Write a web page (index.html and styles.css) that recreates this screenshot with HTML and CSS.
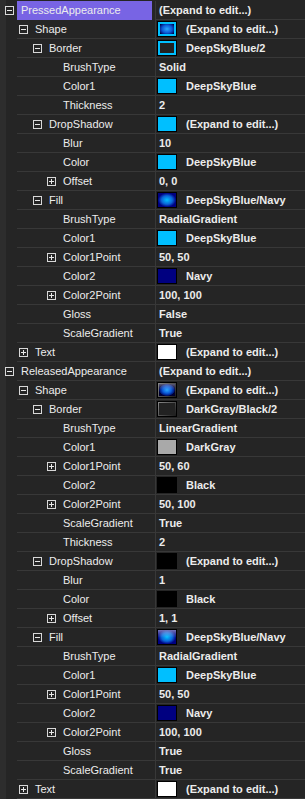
FILE: index.html
```html
<!DOCTYPE html>
<html>
<head>
    <meta charset="UTF-8">
    <title>Property Grid</title>
    <link rel="stylesheet" href="styles.css">
</head>
<body>
    <!-- property grid -->
    <div class="grid">
        <div class="row sel"><span class="gut"><i class="exp minus"></i></span><span class="name l0">PressedAppearance</span><span class="val">(Expand to edit...)</span></div>
        <div class="row"><span class="gut"></span><span class="name l1"><i class="exp minus"></i>Shape</span><span class="val"><b class="sw shape1"></b>(Expand to edit...)</span></div>
        <div class="row"><span class="gut"></span><span class="name l2"><i class="exp minus"></i>Border</span><span class="val"><b class="sw ring-blue"></b>DeepSkyBlue/2</span></div>
        <div class="row"><span class="gut"></span><span class="name leaf">BrushType</span><span class="val">Solid</span></div>
        <div class="row"><span class="gut"></span><span class="name leaf">Color1</span><span class="val"><b class="sw dsb"></b>DeepSkyBlue</span></div>
        <div class="row"><span class="gut"></span><span class="name leaf">Thickness</span><span class="val">2</span></div>
        <div class="row"><span class="gut"></span><span class="name l2"><i class="exp minus"></i>DropShadow</span><span class="val"><b class="sw dsb"></b>(Expand to edit...)</span></div>
        <div class="row"><span class="gut"></span><span class="name leaf">Blur</span><span class="val">10</span></div>
        <div class="row"><span class="gut"></span><span class="name leaf">Color</span><span class="val"><b class="sw dsb"></b>DeepSkyBlue</span></div>
        <div class="row"><span class="gut"></span><span class="name l3"><i class="exp"></i>Offset</span><span class="val">0, 0</span></div>
        <div class="row"><span class="gut"></span><span class="name l2"><i class="exp minus"></i>Fill</span><span class="val"><b class="sw fill1"></b>DeepSkyBlue/Navy</span></div>
        <div class="row"><span class="gut"></span><span class="name leaf">BrushType</span><span class="val">RadialGradient</span></div>
        <div class="row"><span class="gut"></span><span class="name leaf">Color1</span><span class="val"><b class="sw dsb"></b>DeepSkyBlue</span></div>
        <div class="row"><span class="gut"></span><span class="name l3"><i class="exp"></i>Color1Point</span><span class="val">50, 50</span></div>
        <div class="row"><span class="gut"></span><span class="name leaf">Color2</span><span class="val"><b class="sw navy"></b>Navy</span></div>
        <div class="row"><span class="gut"></span><span class="name l3"><i class="exp"></i>Color2Point</span><span class="val">100, 100</span></div>
        <div class="row"><span class="gut"></span><span class="name leaf">Gloss</span><span class="val">False</span></div>
        <div class="row"><span class="gut"></span><span class="name leaf">ScaleGradient</span><span class="val">True</span></div>
        <div class="row"><span class="gut"></span><span class="name l1"><i class="exp"></i>Text</span><span class="val"><b class="sw white"></b>(Expand to edit...)</span></div>

        <div class="row"><span class="gut"><i class="exp minus"></i></span><span class="name l0">ReleasedAppearance</span><span class="val">(Expand to edit...)</span></div>
        <div class="row"><span class="gut"></span><span class="name l1"><i class="exp minus"></i>Shape</span><span class="val"><b class="sw shape2"><b class="core"></b></b>(Expand to edit...)</span></div>
        <div class="row"><span class="gut"></span><span class="name l2"><i class="exp minus"></i>Border</span><span class="val"><b class="sw ring-gray"><b class="core"></b></b>DarkGray/Black/2</span></div>
        <div class="row"><span class="gut"></span><span class="name leaf">BrushType</span><span class="val">LinearGradient</span></div>
        <div class="row"><span class="gut"></span><span class="name leaf">Color1</span><span class="val"><b class="sw gray"></b>DarkGray</span></div>
        <div class="row"><span class="gut"></span><span class="name l3"><i class="exp"></i>Color1Point</span><span class="val">50, 60</span></div>
        <div class="row"><span class="gut"></span><span class="name leaf">Color2</span><span class="val"><b class="sw black"></b>Black</span></div>
        <div class="row"><span class="gut"></span><span class="name l3"><i class="exp"></i>Color2Point</span><span class="val">50, 100</span></div>
        <div class="row"><span class="gut"></span><span class="name leaf">ScaleGradient</span><span class="val">True</span></div>
        <div class="row"><span class="gut"></span><span class="name leaf">Thickness</span><span class="val">2</span></div>
        <div class="row"><span class="gut"></span><span class="name l2"><i class="exp minus"></i>DropShadow</span><span class="val"><b class="sw black"></b>(Expand to edit...)</span></div>
        <div class="row"><span class="gut"></span><span class="name leaf">Blur</span><span class="val">1</span></div>
        <div class="row"><span class="gut"></span><span class="name leaf">Color</span><span class="val"><b class="sw black"></b>Black</span></div>
        <div class="row"><span class="gut"></span><span class="name l3"><i class="exp"></i>Offset</span><span class="val">1, 1</span></div>
        <div class="row"><span class="gut"></span><span class="name l2"><i class="exp minus"></i>Fill</span><span class="val"><b class="sw fill2"></b>DeepSkyBlue/Navy</span></div>
        <div class="row"><span class="gut"></span><span class="name leaf">BrushType</span><span class="val">RadialGradient</span></div>
        <div class="row"><span class="gut"></span><span class="name leaf">Color1</span><span class="val"><b class="sw dsb"></b>DeepSkyBlue</span></div>
        <div class="row"><span class="gut"></span><span class="name l3"><i class="exp"></i>Color1Point</span><span class="val">50, 50</span></div>
        <div class="row"><span class="gut"></span><span class="name leaf">Color2</span><span class="val"><b class="sw navy"></b>Navy</span></div>
        <div class="row"><span class="gut"></span><span class="name l3"><i class="exp"></i>Color2Point</span><span class="val">100, 100</span></div>
        <div class="row"><span class="gut"></span><span class="name leaf">Gloss</span><span class="val">True</span></div>
        <div class="row"><span class="gut"></span><span class="name leaf">ScaleGradient</span><span class="val">True</span></div>
        <div class="row"><span class="gut"></span><span class="name l1"><i class="exp"></i>Text</span><span class="val"><b class="sw white"></b>(Expand to edit...)</span></div>
    </div>
</body>
</html>
```

FILE: styles.css
```css
/* base */
*{margin:0;padding:0;box-sizing:border-box;}
html,body{width:100%;height:100%;}
body{background:#252525;font-family:"Liberation Sans",Arial,sans-serif;font-size:11px;color:#ececec;}

/* grid + rows */
.grid{padding-top:1px;background:linear-gradient(to right,#2d2d2d 0,#2d2d2d 6px,#252525 6px);}
.row{display:flex;height:19px;}
.gut{flex:0 0 17px;display:flex;align-items:center;padding-left:5px;}
.name{flex:0 0 138px;display:flex;align-items:center;border-bottom:1px solid #383838;white-space:nowrap;}
.val{flex:1;display:flex;align-items:center;border-bottom:1px solid #383838;border-left:1px solid #383838;padding-left:3px;font-weight:bold;white-space:nowrap;}

/* indent levels */
.l0{padding-left:4px;}
.l1{padding-left:2px;}
.l2{padding-left:16px;}
.l3{padding-left:30px;}
.leaf{padding-left:46px;}

/* selected row */
.sel .name{background:#7864e4;border-bottom-color:#7864e4;margin-right:3px;flex-basis:135px;}

/* expander box */
.exp{display:inline-block;position:relative;width:9px;height:9px;border:1px solid #d8d8d8;margin-right:7px;flex:0 0 9px;}
.exp::before{content:"";position:absolute;left:1px;top:3px;width:5px;height:1px;background:#e8e8e8;}
.exp::after{content:"";position:absolute;left:3px;top:1px;width:1px;height:5px;background:#e8e8e8;}
.exp.minus::after{display:none;}
.gut .exp{margin-right:0;}

/* color swatches */
.sw{display:inline-block;width:20px;height:16px;border:1px solid #000;margin-left:-2px;margin-right:9px;flex:0 0 20px;}
.dsb{background:#00bfff;}
.navy{background:#000080;}
.white{background:#fff;}
.gray{background:#a9a9a9;}
.black{background:#000;}
.ring-blue{background:#222;box-shadow:inset 0 0 0 2px #00bfff;}
.shape1{background:radial-gradient(ellipse closest-side,#2aa8ff 0%,#0a5ad8 55%,#001a80 85%,#000028 100%);box-shadow:inset 0 0 0 2px #00bfff;}
.fill1{background:radial-gradient(ellipse closest-side,#00bfff 0%,#0a64d8 60%,#000080 100%);}
.fill2{background:linear-gradient(rgba(255,255,255,0.45),rgba(255,255,255,0) 55%),radial-gradient(ellipse closest-side,#00bfff 0%,#0a64d8 60%,#000080 100%);}
.ring-gray,.shape2{padding:1px;background:linear-gradient(135deg,#8a8a8a,#1a1a1a);}
.sw .core{display:block;width:100%;height:100%;background:#222;}
.shape2 .core{background:linear-gradient(rgba(255,255,255,0.35),rgba(255,255,255,0) 50%),radial-gradient(ellipse closest-side,#2aa8ff 0%,#0a5ad8 55%,#001a80 90%,#000030 100%);}
```
